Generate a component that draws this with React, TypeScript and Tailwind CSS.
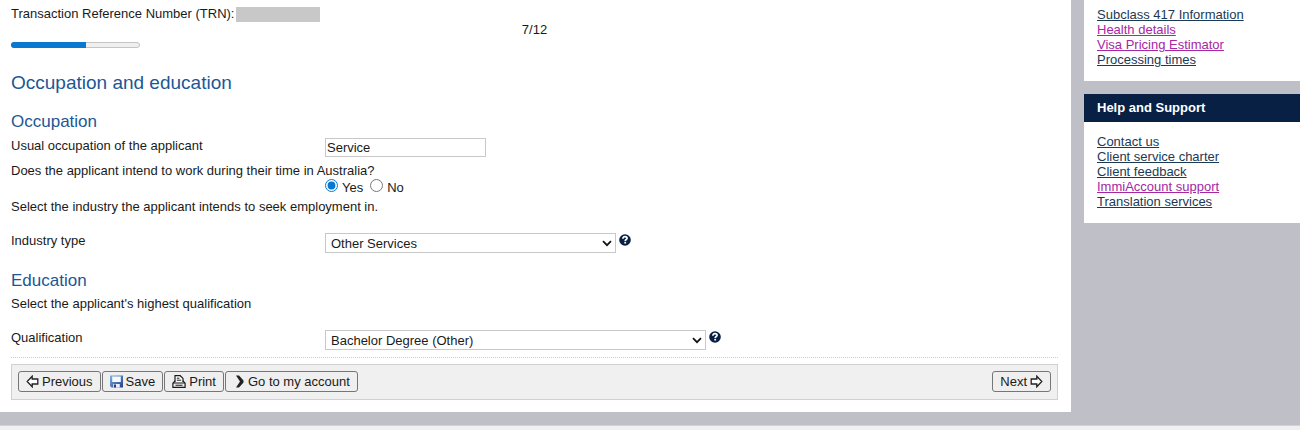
import React, { useState } from "react";

interface SideLink {
  label: string;
  visited?: boolean;
}

const relatedLinks: SideLink[] = [
  { label: "Subclass 417 Information" },
  { label: "Health details", visited: true },
  { label: "Visa Pricing Estimator", visited: true },
  { label: "Processing times" },
];

const helpLinks: SideLink[] = [
  { label: "Contact us" },
  { label: "Client service charter" },
  { label: "Client feedback" },
  { label: "ImmiAccount support", visited: true },
  { label: "Translation services" },
];

const LinkList: React.FC<{ links: SideLink[] }> = ({ links }) => (
  <ul>
    {links.map((link) => (
      <li key={link.label}>
        <a href="#" className={`underline ${link.visited ? "text-[#a626a4]" : "text-[#1c3a54]"}`}>
          {link.label}
        </a>
      </li>
    ))}
  </ul>
);

const HelpButton: React.FC<{ label: string }> = ({ label }) => (
  <button type="button" aria-label={label} className="mt-px ml-[3px] h-3 w-3">
    <svg viewBox="0 0 12 12" className="block h-3 w-3">
      <circle cx="6" cy="6" r="5.8" fill="#082044" />
      <path d="M3.9 4.7C3.9 3.2 4.8 2.6 6 2.6s2.1.6 2.1 1.7c0 1.2-1.9 1.2-1.9 2.6" fill="none" stroke="#fff" strokeWidth="1.7" />
      <rect x="5.3" y="7.8" width="1.8" height="1.7" fill="#fff" />
    </svg>
  </button>
);

interface SelectFieldProps {
  id: string;
  label: string;
  options: string[];
  width: string;
}

const SelectField: React.FC<SelectFieldProps> = ({ id, label, options, width }) => (
  <div className="mt-[18px] flex items-start">
    <label htmlFor={id} className="w-[314px] shrink-0">
      {label}
    </label>
    <div className={`grid items-center ${width}`}>
      <select
        id={id}
        className="col-start-1 row-start-1 h-5 w-full appearance-none border border-[#c8c8c8] bg-white pr-5 pl-[5px]"
      >
        {options.map((option) => (
          <option key={option}>{option}</option>
        ))}
      </select>
      <svg viewBox="0 0 10 7" className="pointer-events-none col-start-1 row-start-1 mr-1 h-[7px] w-2.5 justify-self-end">
        <path d="M1 1.2l4 4 4-4" fill="none" stroke="#111" strokeWidth="1.7" />
      </svg>
    </div>
    <HelpButton label={`Help for ${label}`} />
  </div>
);

const ArrowIcon: React.FC<{ flip?: boolean }> = ({ flip }) => (
  <svg viewBox="0 0 13 13" className={`h-[13px] w-[13px] ${flip ? "-scale-x-100" : ""}`}>
    <path d="M6.2 1.2L1.2 6.5l5 5.3V9h5.6V4H6.2z" fill="#fff" stroke="#222" strokeWidth="1.3" />
  </svg>
);

const SaveIcon = () => (
  <svg viewBox="0 0 13 13" className="h-[13px] w-[13px]">
    <defs>
      <linearGradient id="disk" x1="0" y1="0" x2="1" y2="1">
        <stop offset="0" stopColor="#7db4e6" />
        <stop offset="1" stopColor="#223c86" />
      </linearGradient>
    </defs>
    <path d="M0 .5h13v12H1.5L0 11z" fill="url(#disk)" />
    <path d="M2.2 1.5h8.6V7H2.2z" fill="#f4f9ff" />
    <path d="M3.2 9h6.6v3.5H3.2z" fill="#e8edf6" />
    <path d="M4 9.5h2v3H4z" fill="#223c86" />
  </svg>
);

const PrintIcon = () => (
  <svg viewBox="0 0 14 13" className="h-[13px] w-3.5" fill="none" stroke="#1a1a1a">
    <path d="M3 7V.7h5.2L11 3.4V7" fill="#fff" strokeWidth="1.2" />
    <path d="M4.8 3.2h2.6M4.8 5.2h4.4" />
    <path d="M3 6L.9 8.2v4.1h12.2V8.2L11 6" strokeWidth="1.2" />
    <path d="M1 8h12M3.5 10.2h7" strokeWidth="1.1" />
  </svg>
);

const ChevronIcon = () => (
  <svg viewBox="0 0 12 13" className="h-[13px] w-3">
    <path d="M3 .5h3l4.5 5v2L6 12.5H3l4-6z" fill="#222" />
  </svg>
);

const ToolButton: React.FC<{ children: React.ReactNode }> = ({ children }) => (
  <button
    type="button"
    className="flex h-[21px] items-center gap-[3px] rounded-[3px] border border-[#767676] bg-[#efefef] px-[7px] hover:bg-[#e5e5e5]"
  >
    {children}
  </button>
);

export default function App() {
  const [occupation, setOccupation] = useState("Service");
  const [intendsToWork, setIntendsToWork] = useState("Yes");

  return (
    <div className="min-h-screen bg-[#f0f0f2] font-['Liberation_Sans',Arial,sans-serif] text-[13px] leading-[15px] text-[#1a1a1a]">
      <div className="flex items-start gap-[13px] border-b border-[#d2d2d8] bg-[#bfbfc8] pb-[13px]">
        <main className="min-w-0 flex-1 bg-white px-[13px] pt-1 pb-3 pl-[11px]">
          <div className="flex items-center gap-0.5 leading-5">
            Transaction Reference Number (TRN):
            <span className="h-[15px] w-[84px] bg-[#c8c8c8]"></span>
          </div>
          <p className="text-center leading-3">7/12</p>
          <progress
            value={7}
            max={12}
            aria-label="Application progress"
            className="mt-1.5 block h-1.5 w-[129px] appearance-none overflow-hidden rounded-full [&::-webkit-progress-bar]:rounded-full [&::-webkit-progress-bar]:bg-[#efefef] [&::-webkit-progress-bar]:inset-ring [&::-webkit-progress-bar]:inset-ring-[#c4c4c4] [&::-webkit-progress-value]:bg-[#0878d0]"
          />

          <h1 className="mt-[23px] text-[19px] leading-6 text-[#1b5796]">Occupation and education</h1>

          <h2 className="mt-[17px] text-[17px] leading-5 text-[#1b5796]">Occupation</h2>
          <div className="mt-1.5 flex items-start">
            <label htmlFor="occupation" className="w-[314px] shrink-0 leading-4">
              Usual occupation of the applicant
            </label>
            <input
              id="occupation"
              type="text"
              value={occupation}
              onChange={(e) => setOccupation(e.target.value)}
              className="h-[19px] w-[161px] border border-[#c8c8c8] px-px"
            />
          </div>

          <fieldset className="mt-1.5">
            <legend className="leading-4">Does the applicant intend to work during their time in Australia?</legend>
            <div className="ml-[314px] flex gap-[7px]">
              {["Yes", "No"].map((answer) => (
                <label key={answer} className="flex items-start gap-1">
                  <input
                    type="radio"
                    name="intendsToWork"
                    value={answer}
                    checked={intendsToWork === answer}
                    onChange={() => setIntendsToWork(answer)}
                    className="h-[13px] w-[13px] accent-[#0878d0]"
                  />
                  <span className="pt-px leading-4">{answer}</span>
                </label>
              ))}
            </div>
          </fieldset>

          <p className="mt-[3px] leading-4">Select the industry the applicant intends to seek employment in.</p>
          <SelectField
            id="industry"
            label="Industry type"
            options={["Other Services", "Retail Trade", "Construction"]}
            width="w-[291px]"
          />

          <h2 className="mt-[18px] text-[17px] leading-5 text-[#1b5796]">Education</h2>
          <p className="mt-[5px] leading-4">Select the applicant's highest qualification</p>
          <SelectField
            id="qualification"
            label="Qualification"
            options={["Bachelor Degree (Other)", "Masters Degree (Other)", "Diploma (Other)"]}
            width="w-[381px]"
          />

          <div className="mt-[7px] border-t border-dotted border-[#cccccc]"></div>
          <div className="mt-1.5 flex justify-between border border-[#d0d0d0] bg-[#f0f0f0] p-1.5 pb-[7px]">
            <div className="flex gap-px">
              <ToolButton>
                <ArrowIcon />
                Previous
              </ToolButton>
              <ToolButton>
                <SaveIcon />
                Save
              </ToolButton>
              <ToolButton>
                <PrintIcon />
                Print
              </ToolButton>
              <ToolButton>
                <ChevronIcon />
                Go to my account
              </ToolButton>
            </div>
            <ToolButton>
              Next
              <ArrowIcon flip />
            </ToolButton>
          </div>
        </main>

        <aside className="w-[216px] shrink-0">
          <section className="bg-white px-[13px] pt-[7px] pb-3.5">
            <LinkList links={relatedLinks} />
          </section>
          <section className="mt-[13px] bg-white">
            <h2 className="bg-[#082044] px-[13px] leading-7 font-bold text-white">Help and Support</h2>
            <div className="px-[13px] pt-3 pb-3.5">
              <LinkList links={helpLinks} />
            </div>
          </section>
        </aside>
      </div>
    </div>
  );
}
